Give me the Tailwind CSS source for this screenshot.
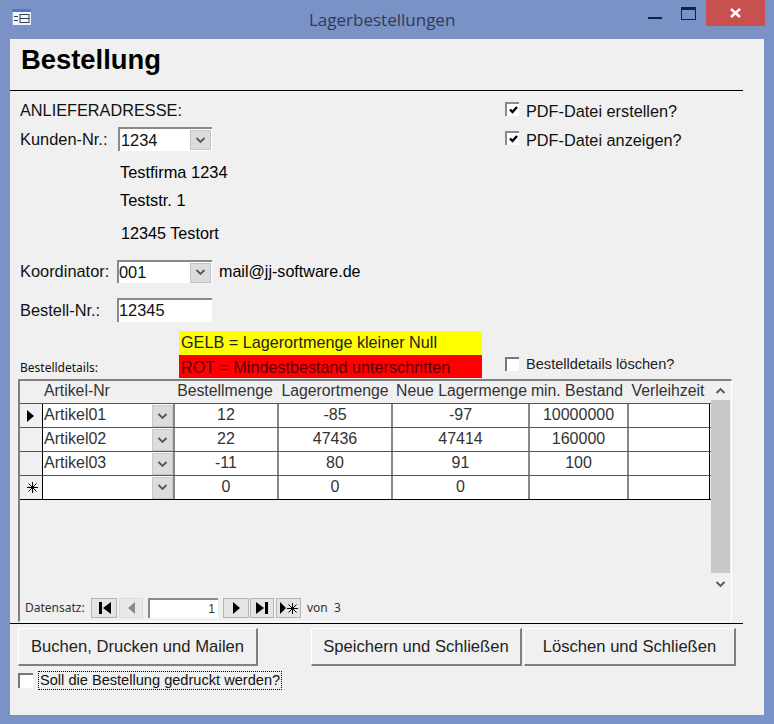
<!DOCTYPE html>
<html lang="de">
<head>
<meta charset="utf-8">
<title>Lagerbestellungen</title>
<script src="https://cdn.jsdelivr.net/npm/@tailwindcss/browser@4"></script>
</head>
<body class="m-0">
<div class="w-[774px] h-[724px] overflow-hidden bg-[#7a92c5] flex flex-col font-['Liberation_Sans',Arial,sans-serif] text-[#111]">
  <!-- title bar -->
  <div class="h-[39px] flex items-start relative shrink-0">
    <svg class="ml-[12px] mt-[9px]" width="20" height="17" viewBox="0 0 20 17"><rect width="19" height="16" fill="#f4f6fa"/><rect width="19" height="3" fill="#4f79c4"/><rect y="3" width="1" height="13" fill="#9fb2d4"/><rect x="2" y="7" width="4" height="1" fill="#31415f"/><rect x="2" y="11" width="4" height="1" fill="#31415f"/><rect x="8" y="5.500" width="9" height="4" fill="none" stroke="#31415f"/><rect x="8" y="9.500" width="9" height="4" fill="none" stroke="#31415f"/></svg>
    <div class="absolute left-[309px] top-[8px] text-[17px] leading-[24px] text-[#303b58] font-['Open_Sans',sans-serif] whitespace-nowrap">Lagerbestellungen</div>
    <div class="ml-auto flex items-start mr-[9px]">
      <div class="w-[14px] h-[2px] bg-[#16233f] mt-[17px] mr-[19px]"></div>
      <div class="w-[15px] h-[13px] border border-[#16233f] border-t-[3px] mt-[7px] mr-[10px]"></div>
      <div class="w-[59px] h-[26px] bg-[#c8504f] flex items-center justify-center">
        <svg width="11" height="10" viewBox="0 0 11 10"><path d="M1 1 L10 9 M10 1 L1 9" stroke="#fff" stroke-width="2.400"/></svg>
      </div>
    </div>
  </div>

  <!-- form -->
  <div class="ml-[10px] w-[754px] h-[676px] bg-[#f0f0f0] text-[16.400px]">
    <div class="w-[733px] h-[52px] border-b border-black pl-[11px] pt-[3px] text-[27.400px] leading-[36px] font-bold text-black">Bestellung</div>

    <div class="flex h-[240px]">
      <div class="w-[495px] pl-[10px]">
        <div class="mt-[9px] h-[20px] leading-[21px] text-[16.300px]">ANLIEFERADRESSE:</div>
        <div class="mt-[7px] h-[24px] flex items-center">
          <span class="w-[98px] pt-[1px]">Kunden-Nr.:</span>
          <div class="w-[94px] h-[24px] bg-white border-l-2 border-t-2 border-[#8a8a8a] flex items-center pl-[1px]">
            <span class="grow">1234</span>
            <div class="w-[21px] h-[20px] mr-[1px] bg-[#dcdcdc] border border-[#c4c4c4] flex items-center justify-center"><svg width="11" height="7" viewBox="0 0 11 7"><path d="M1.500 1 L5.500 5 L9.500 1" fill="none" stroke="#4a5a6a" stroke-width="1.800"/></svg></div>
          </div>
        </div>
        <div class="mt-[11px] h-[20px] leading-[21px] pl-[100px] text-black">Testfirma 1234</div>
        <div class="mt-[8px] h-[20px] leading-[21px] pl-[100px] text-black">Teststr. 1</div>
        <div class="mt-[13px] h-[20px] leading-[21px] pl-[101px] text-black text-[16.200px]">12345 Testort</div>
        <div class="mt-[17px] h-[23px] flex items-center">
          <span class="w-[97px]">Koordinator:</span>
          <div class="w-[95px] h-[23px] bg-white border-l-2 border-t-2 border-[#8a8a8a] flex items-center">
            <span class="grow">001</span>
            <div class="w-[21px] h-[20px] mr-[1px] bg-[#dcdcdc] border border-[#c4c4c4] flex items-center justify-center"><svg width="11" height="7" viewBox="0 0 11 7"><path d="M1.500 1 L5.500 5 L9.500 1" fill="none" stroke="#4a5a6a" stroke-width="1.800"/></svg></div>
          </div>
          <span class="ml-[7px] text-black text-[16.100px]">mail@jj-software.de</span>
        </div>
        <div class="mt-[15px] h-[24px] flex items-center">
          <span class="w-[97px] pt-[1px]">Bestell-Nr.:</span>
          <div class="w-[95px] h-[24px] bg-white border-l-2 border-t-2 border-[#8a8a8a] leading-[21px]">12345</div>
        </div>
      </div>
      <div class="pt-[10px] text-[16.300px]">
        <div class="h-[20px] flex items-center">
          <div class="w-[14px] h-[14px] mb-[4px] bg-white border-l-2 border-t-2 border-[#8a8a8a] flex items-center justify-center"><svg width="9" height="8" viewBox="0 0 9 8"><path d="M1 3.500 L3.500 6 L8 1" fill="none" stroke="#000" stroke-width="2.400"/></svg></div>
          <span class="ml-[7px]">PDF-Datei erstellen?</span>
        </div>
        <div class="mt-[9px] h-[20px] flex items-center">
          <div class="w-[14px] h-[14px] mb-[4px] bg-white border-l-2 border-t-2 border-[#8a8a8a] flex items-center justify-center"><svg width="9" height="8" viewBox="0 0 9 8"><path d="M1 3.500 L3.500 6 L8 1" fill="none" stroke="#000" stroke-width="2.400"/></svg></div>
          <span class="ml-[7px]">PDF-Datei anzeigen?</span>
        </div>
      </div>
    </div>

    <!-- legend row -->
    <div class="flex h-[48px]">
      <div class="w-[169px] pl-[10px] pt-[29px] text-[12px] leading-[16px] font-['Noto_Sans',sans-serif] whitespace-nowrap">Bestelldetails:</div>
      <div class="w-[303px] h-[47px] flex flex-col text-[#222]">
        <div class="h-[24px] bg-[#ffff00] pl-[2px] leading-[23px] text-[16.200px] whitespace-nowrap">GELB = Lagerortmenge kleiner Null</div>
        <div class="h-[23px] bg-[#ff0000] pl-[2px] leading-[24px] text-[16.200px] text-[#5a0000] whitespace-nowrap">ROT = Mindestbestand unterschritten</div>
      </div>
      <div class="ml-[23px] pt-[25px] h-[48px] flex items-start">
        <div class="w-[14px] h-[14px] mt-[1px] bg-white border-l-2 border-t-2 border-[#777]"></div>
        <span class="ml-[7px] text-[14.600px] leading-[17px] text-[#222]">Bestelldetails löschen?</span>
      </div>
    </div>

    <!-- subform -->
    <div class="ml-[8px] w-[714px] h-[243px] border-l-2 border-t-2 border-[#808080] border-r border-b border-r-white border-b-white flex text-[#333] text-[16px] leading-[22px]">
      <div class="w-[691px] flex flex-col">
        <div class="grid grid-cols-[23px_132px_104px_114px_137px_99px_81px] h-[22px] leading-[20px] text-center whitespace-nowrap text-[15.800px]">
          <div></div><div class="text-left pl-[1px]">Artikel-Nr</div><div class="pr-[4px]">Bestellmenge</div><div class="pr-[2px]">Lagerortmenge</div><div>Neue Lagermenge</div><div class="pr-[5px]">min. Bestand</div><div class="pr-[3px]">Verleihzeit</div>
        </div>
        <!-- row 1 -->
        <div class="grid grid-cols-[23px_132px_104px_114px_137px_99px_81px] h-[24px] border-t border-[#555] text-center">
          <div class="border-r border-black flex items-center justify-end pr-[7px]"><svg width="8" height="12" viewBox="0 0 8 12"><path d="M0 0 L7 6 L0 12Z" fill="#000"/></svg></div>
          <div class="bg-white border-r-2 border-[#888] flex items-center text-left pl-[1px]"><span class="grow mb-[2px]">Artikel01</span><div class="w-[21px] h-[22px] bg-[#dcdcdc] border border-[#c8c8c8] flex items-center justify-center"><svg width="11" height="7" viewBox="0 0 11 7"><path d="M1.500 1 L5.500 5 L9.500 1" fill="none" stroke="#4a5a6a" stroke-width="1.800"/></svg></div></div>
          <div class="bg-white border-r-2 border-[#888]">12</div><div class="bg-white border-r-2 border-[#888]">-85</div><div class="bg-white border-r-2 border-[#888]">-97</div><div class="bg-white border-r-2 border-[#888]">10000000</div><div class="bg-white border-r border-black"></div>
        </div>
        <!-- row 2 -->
        <div class="grid grid-cols-[23px_132px_104px_114px_137px_99px_81px] h-[24px] border-t border-[#555] text-center">
          <div class="border-r border-black"></div>
          <div class="bg-white border-r-2 border-[#888] flex items-center text-left pl-[1px]"><span class="grow mb-[2px]">Artikel02</span><div class="w-[21px] h-[22px] bg-[#dcdcdc] border border-[#c8c8c8] flex items-center justify-center"><svg width="11" height="7" viewBox="0 0 11 7"><path d="M1.500 1 L5.500 5 L9.500 1" fill="none" stroke="#4a5a6a" stroke-width="1.800"/></svg></div></div>
          <div class="bg-white border-r-2 border-[#888]">22</div><div class="bg-white border-r-2 border-[#888]">47436</div><div class="bg-white border-r-2 border-[#888]">47414</div><div class="bg-white border-r-2 border-[#888]">160000</div><div class="bg-white border-r border-black"></div>
        </div>
        <!-- row 3 -->
        <div class="grid grid-cols-[23px_132px_104px_114px_137px_99px_81px] h-[24px] border-t border-[#555] text-center">
          <div class="border-r border-black"></div>
          <div class="bg-white border-r-2 border-[#888] flex items-center text-left pl-[1px]"><span class="grow mb-[2px]">Artikel03</span><div class="w-[21px] h-[22px] bg-[#dcdcdc] border border-[#c8c8c8] flex items-center justify-center"><svg width="11" height="7" viewBox="0 0 11 7"><path d="M1.500 1 L5.500 5 L9.500 1" fill="none" stroke="#4a5a6a" stroke-width="1.800"/></svg></div></div>
          <div class="bg-white border-r-2 border-[#888]">-11</div><div class="bg-white border-r-2 border-[#888]">80</div><div class="bg-white border-r-2 border-[#888]">91</div><div class="bg-white border-r-2 border-[#888]">100</div><div class="bg-white border-r border-black"></div>
        </div>
        <!-- new row -->
        <div class="grid grid-cols-[23px_132px_104px_114px_137px_99px_81px] h-[25px] border-t border-b border-t-[#555] border-b-black text-center">
          <div class="border-r border-black flex items-center justify-end pr-[4px]"><svg width="11" height="11" viewBox="0 0 11 11"><path d="M5.500 0 V11 M0 5.500 H11 M1.500 1.500 L9.500 9.500 M9.500 1.500 L1.500 9.500" stroke="#000" stroke-width="1"/></svg></div>
          <div class="bg-white border-r-2 border-[#888] flex items-center justify-end"><div class="w-[21px] h-[22px] bg-[#dcdcdc] border border-[#c8c8c8] flex items-center justify-center"><svg width="11" height="7" viewBox="0 0 11 7"><path d="M1.500 1 L5.500 5 L9.500 1" fill="none" stroke="#4a5a6a" stroke-width="1.800"/></svg></div></div>
          <div class="bg-white border-r-2 border-[#888]">0</div><div class="bg-white border-r-2 border-[#888]">0</div><div class="bg-white border-r-2 border-[#888]">0</div><div class="bg-white border-r-2 border-[#888]"></div><div class="bg-white border-r border-black"></div>
        </div>
        <!-- navigation -->
        <div class="mt-auto mb-[3px] h-[20px] flex items-center text-[12px] leading-[20px] text-[#333]">
          <span class="ml-[5px] w-[66px] text-[12px] font-['Noto_Sans',sans-serif]">Datensatz:</span>
          <div class="w-[26px] h-[20px] bg-[#e4e4e4] border border-[#b5b5b5] flex items-center justify-center"><svg width="13" height="12" viewBox="0 0 13 12"><path d="M1 0h3v12H1z M13 0 L5 6 L13 12Z" fill="#000"/></svg></div>
          <div class="ml-[2px] w-[24px] h-[20px] bg-[#e8e8e8] border border-[#dcdcdc] flex items-center justify-center"><svg width="7" height="12" viewBox="0 0 7 12"><path d="M7 0 L0 6 L7 12Z" fill="#8a8a8a"/></svg></div>
          <div class="ml-[5px] w-[70px] h-[20px] bg-white border-l-2 border-t-2 border-[#8a8a8a] text-right pr-[3px] leading-[18px] text-[12px]">1</div>
          <div class="ml-[5px] w-[26px] h-[20px] bg-[#e4e4e4] border border-[#b5b5b5] flex items-center justify-center"><svg width="7" height="12" viewBox="0 0 7 12"><path d="M0 0 L7 6 L0 12Z" fill="#000"/></svg></div>
          <div class="ml-[1px] w-[24px] h-[20px] bg-[#e4e4e4] border border-[#b5b5b5] flex items-center justify-center"><svg width="12" height="12" viewBox="0 0 12 12"><path d="M0 0 L8 6 L0 12Z M9 0h3v12H9z" fill="#000"/></svg></div>
          <div class="ml-[2px] w-[25px] h-[20px] bg-[#e4e4e4] border border-[#b5b5b5] flex items-center justify-center gap-[1px]"><svg width="6" height="12" viewBox="0 0 6 12"><path d="M0 0 L6 6 L0 12Z" fill="#000"/></svg><svg width="11" height="11" viewBox="0 0 11 11"><path d="M5.500 0 V11 M0 5.500 H11 M1.500 1.500 L9.500 9.500 M9.500 1.500 L1.500 9.500" stroke="#000" stroke-width="1"/></svg></div>
          <span class="ml-[6px] text-[12px] font-['Noto_Sans',sans-serif] whitespace-pre">von  3</span>
        </div>
      </div>
      <!-- scrollbar -->
      <div class="w-[19px] h-[214px] flex flex-col">
        <div class="h-[19px] flex items-center justify-center"><svg width="11" height="7" viewBox="0 0 11 7"><path d="M1.500 6 L5.500 2 L9.500 6" fill="none" stroke="#555" stroke-width="1.800"/></svg></div>
        <div class="h-[173px] bg-[#c8c8c8]"></div>
        <div class="h-[22px] flex items-center justify-center"><svg width="11" height="7" viewBox="0 0 11 7"><path d="M1.500 1 L5.500 5 L9.500 1" fill="none" stroke="#555" stroke-width="1.800"/></svg></div>
      </div>
    </div>

    <div class="w-[733px] h-[1px] bg-black mt-[1px]"></div>

    <!-- buttons -->
    <div class="flex mt-[4px] pl-[8px] text-[#222] text-[16.600px]">
      <button class="w-[240px] h-[38px] pt-[2px] bg-[#f0f0f0] border-t border-l border-white border-r-2 border-b-2 border-r-[#808080] border-b-[#808080]">Buchen, Drucken und Mailen</button>
      <button class="ml-[53px] w-[211px] h-[38px] pt-[2px] bg-[#f0f0f0] border-t border-l border-white border-r-2 border-b-2 border-r-[#808080] border-b-[#808080]">Speichern und Schließen</button>
      <button class="ml-[2px] w-[212px] h-[38px] pt-[2px] bg-[#f0f0f0] border-t border-l border-white border-r-2 border-b-2 border-r-[#808080] border-b-[#808080]">Löschen und Schließen</button>
    </div>

    <div class="flex items-center mt-[5px] ml-[8px] h-[18px]">
      <div class="w-[15px] h-[15px] bg-white border-l-2 border-t-2 border-[#777]"></div>
      <span class="ml-[5px] h-[19px] border border-dotted border-black px-[1px] text-[14.600px] leading-[17px] whitespace-nowrap">Soll die Bestellung gedruckt werden?</span>
    </div>
  </div>
</div>
</body>
</html>
